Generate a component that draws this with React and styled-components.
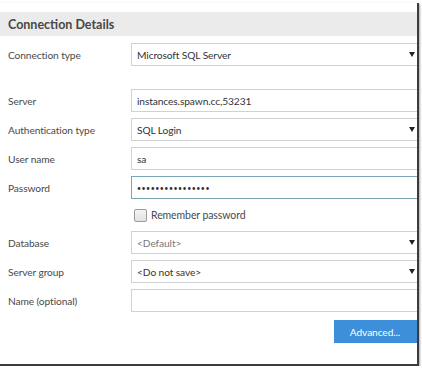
import React from "react";
import styled, { createGlobalStyle } from "styled-components";

const Global = createGlobalStyle`
  html, body { margin: 0; padding: 0; background: #ffffff; }
  body { font-family: Lato, "Open Sans", sans-serif; }
`;

const Frame = styled.div`
  margin-top: 3px;
  width: 417px;
  height: 352px;
  border-right: 2px solid #3c3c3c;
  border-bottom: 2px solid #3c3c3c;
  box-shadow: 1px 1px 2px rgba(0, 0, 0, 0.35);
  overflow: hidden;
  background: #ffffff;
  padding-top: 9px;
  box-sizing: content-box;
`;

const Header = styled.div`
  height: 24px;
  background: #ebebeb;
  display: flex;
  align-items: center;
  padding-left: 8px;
  font-size: 12.5px;
  font-weight: 700;
  color: #474747;
`;

const Form = styled.div`
  display: grid;
  grid-template-columns: 123px 295px;
  row-gap: 6px;
  padding: 7px 0 0 8px;
  font-size: 10.2px;
  color: #4a4a4a;
  letter-spacing: -0.1px;
`;

const Label = styled.div`
  display: flex;
  align-items: center;
`;

const Spacer = styled.div`
  grid-column: 1 / -1;
  height: 11px;
`;

const Field = styled.div`
  position: relative;
  box-sizing: border-box;
  height: 23px;
  border: 1px solid ${(p) => (p.$focus ? "#7ba7b6" : "#d2d2d2")};
  background: #fff;
  display: flex;
  align-items: center;
  padding-left: 5px;
  color: ${(p) => (p.$muted ? "#777" : "#333")};
`;

const Dots = styled.span`
  font-size: 7px;
  letter-spacing: 0.5px;
  color: #333;
`;

const Arrow = styled.span`
  position: absolute;
  right: 10px;
  top: 8px;
  width: 0;
  height: 0;
  border-left: 3.5px solid transparent;
  border-right: 3.5px solid transparent;
  border-top: 5px solid #222;
`;

const CheckRow = styled.div`
  grid-column: 2;
  height: 20px;
  display: flex;
  align-items: center;
  gap: 4px;
  padding-left: 3px;
  font-size: 10.5px;
`;

const Box = styled.span`
  width: 11px;
  height: 11px;
  border: 1px solid #9a9a9a;
  border-radius: 2px;
  background: linear-gradient(#f4f4f4, #e2e2e2);
`;

const ButtonRow = styled.div`
  grid-column: 2;
  display: flex;
  justify-content: flex-end;
  margin-top: 2px;
`;

const Button = styled.div`
  box-sizing: border-box;
  width: 92px;
  padding-right: 10px;
  height: 23px;
  background: #3d8fd9;
  color: #fff;
  display: flex;
  align-items: center;
  justify-content: center;
  font-size: 10.2px;
`;

const rows = [
  ["Server", "instances.spawn.cc,53231"],
  ["Authentication type", "SQL Login", { select: true }],
  ["User name", "sa"],
  ["Password", "••••••••••••••••", { focus: true, dots: true }],
];

const rows2 = [
  ["Database", "<Default>", { select: true, muted: true }],
  ["Server group", "<Do not save>", { select: true }],
  ["Name (optional)", ""],
];

function Row({ label, value, opts = {} }) {
  return (
    <>
      <Label>{label}</Label>
      <Field $focus={opts.focus} $muted={opts.muted}>
        {opts.dots ? <Dots>{value}</Dots> : value}
        {opts.select && <Arrow />}
      </Field>
    </>
  );
}

export default function App() {
  return (
    <>
      <Global />
      <Frame>
        <Header>Connection Details</Header>
        <Form>
          <Row label="Connection type" value="Microsoft SQL Server" opts={{ select: true }} />
          <Spacer />
          {rows.map(([l, v, o]) => (
            <Row key={l} label={l} value={v} opts={o} />
          ))}
          <CheckRow>
            <Box />
            Remember password
          </CheckRow>
          {rows2.map(([l, v, o]) => (
            <Row key={l} label={l} value={v} opts={o} />
          ))}
          <ButtonRow>
            <Button>Advanced...</Button>
          </ButtonRow>
        </Form>
      </Frame>
    </>
  );
}
